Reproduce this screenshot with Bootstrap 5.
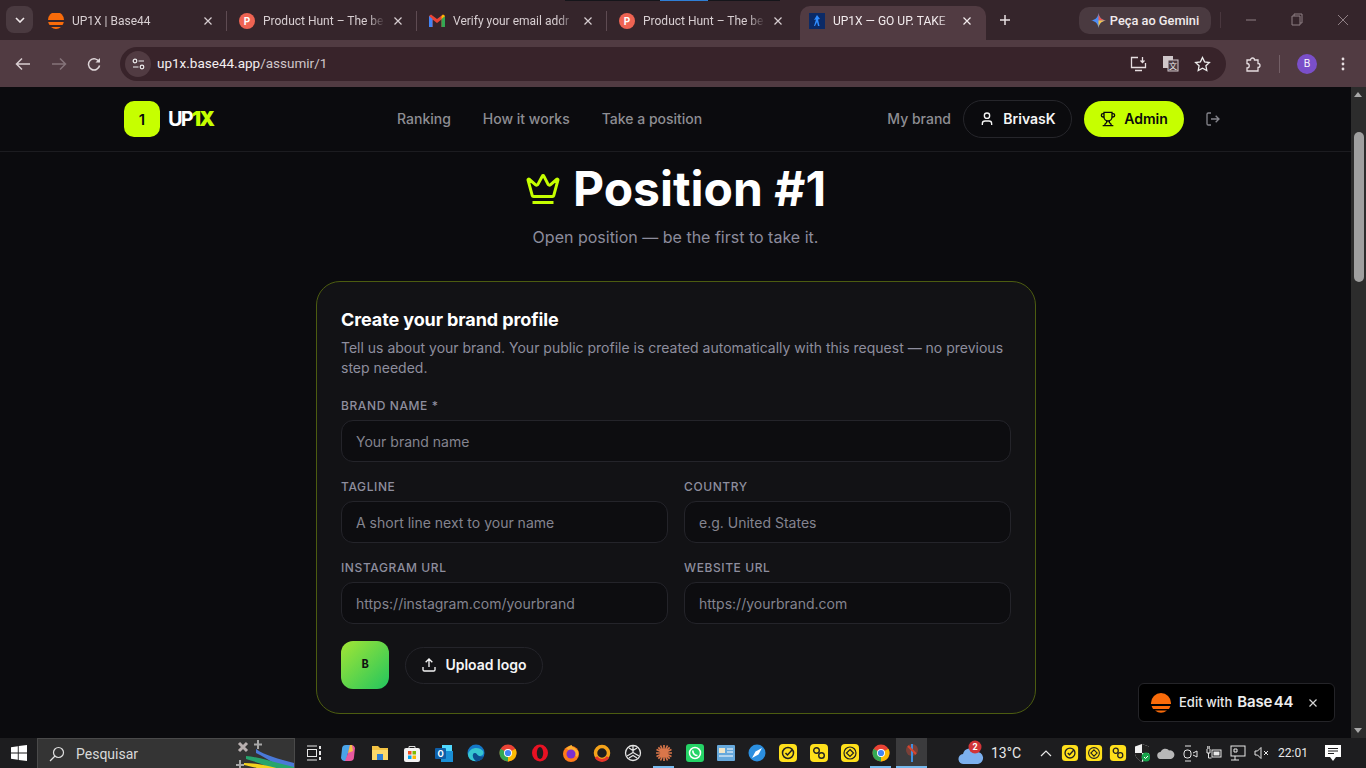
<!DOCTYPE html>
<html lang="en">
<head>
<meta charset="utf-8">
<title>UP1X — GO UP. TAKE</title>
<link rel="stylesheet" href="https://cdn.jsdelivr.net/npm/bootstrap@5.3.2/dist/css/bootstrap.min.css">
<style>
    html, body { height: 100%; overflow: hidden; }
    body { background: #0b0b0e; font-family: Inter, "Liberation Sans", sans-serif; color: #fff; }
    .screen { height: 768px; position: relative; }
    .top-edge { position: absolute; top: 0; left: 565px; width: 215px; height: 1px; background: #15151a; }
    .top-edge i { position: absolute; left: 95px; width: 48px; height: 1px; background: #2f7fd6; }

    /* browser frame */
    .tab-strip { height: 40px; background: #35252b; font: 12px Roboto, "Liberation Sans", sans-serif; color: #d8cfd2; padding-left: 6px; }
    .tab-menu { width: 27px; height: 27px; margin-top: 6px; border-radius: 8px; background: #4a3a40; }
    .tab-box { width: 190px; height: 34px; margin-top: 6px; padding: 0 10px 5px 12px; gap: 8px; position: relative; }
    .tab-first { margin-left: 4px; padding-left: 11px; }
    .tab-box + .tab-box::before { content: ""; position: absolute; left: -1px; top: 5px; height: 20px; width: 1px; background: #5e4b52; }
    .tab-on { background: #513b42; border-radius: 10px 10px 0 0; color: #f3ecee; width: 186px; margin-left: 3px; padding-left: 9px; }
    .tab-box.tab-on::before, .tab-on + .tab-box::before { display: none; }
    .tab-label { flex: 1; white-space: nowrap; font-size: 12px; -webkit-mask-image: linear-gradient(90deg, #000 86%, transparent); mask-image: linear-gradient(90deg, #000 86%, transparent); }
    .new-tab { margin: 14px 0 0 13px; flex-shrink: 0; }
    .gemini-pill { margin: 7px 0 0 68px; flex-shrink: 0; width: 132px; height: 27px; border-radius: 10px; background: #4a3a40; color: #f1eaec; font: 500 12.8px Roboto, sans-serif; }
    .win-btns { margin: 12px 0 0 9px; flex-shrink: 0; width: 146px; }
    .tool-row { height: 47px; background: #513b42; padding-left: 15px; }
    .nav-arrow { margin-right: 20px; flex-shrink: 0; }
    .addr-bar { width: 1106px; height: 34px; margin-left: 19px; border-radius: 17px; background: #38232a; padding-left: 5px; padding-right: 15px; font: 13.5px Roboto, sans-serif; color: #f4eff0; flex-shrink: 0; }
    .addr-bar > span { margin-top: -2px; }
    .addr-bar span span { color: #cfc6c9; }
    .site-chip { width: 26px; height: 26px; border-radius: 50%; background: #513b42; margin-right: 6px; }
    .addr-tools { gap: 15px; }
    .ext-icon { margin-left: 19px; flex-shrink: 0; }
    .tool-sep { width: 1px; height: 18px; background: #735f66; margin-left: 18px; flex-shrink: 0; }
    .acct-dot { width: 20px; height: 20px; margin-left: 17px; background: #7a4fc9; font-size: 10px; color: #fff; flex-shrink: 0; }
    .more-dots { margin-left: 24px; flex-shrink: 0; }

    /* page */
    .page-area { height: 651px; background: #0b0b0e; position: relative; overflow: hidden; }
    .page-inner { flex: 1; min-width: 0; }
    .scroll-rail { width: 15px; background: #2c2c2c; position: relative; }
    .scroll-rail .thumb { position: absolute; left: 3px; right: 2px; top: 45px; height: 150px; border-radius: 5px; background: #9f9f9f; }
    .scroll-up, .scroll-down { position: absolute; left: 3px; border-left: 4.5px solid transparent; border-right: 4.5px solid transparent; }
    .scroll-up { top: 5px; border-bottom: 5px solid #a8a8a8; }
    .scroll-down { bottom: 5px; border-top: 5px solid #a8a8a8; }

    .top-nav { height: 65px; border-bottom: 1px solid #1c1c20; padding: 0; }
    .top-nav .container-fluid { max-width: 1104px; padding: 0 7px 0 0; margin-left: 124px; position: relative; }
    .logo-mark { width: 36px; height: 36px; border-radius: 10px; background: #c6ff00; color: #0a0a0c; font: 600 15px Inter, sans-serif; }
    .logo-word { font: 700 20px/1 Inter, sans-serif; letter-spacing: -1.8px; margin-left: 8px; color: #fff; }
    .logo-word b { color: #c6ff00; }
    .center-links { position: absolute; left: 273px; top: 0; bottom: 0; gap: 32px; }
    .plain-link { color: #8e8e93; font-size: 14px; line-height: 20px; font-weight: 500; text-decoration: none; }
    .brand-link { margin-right: 12px; }
    .user-pill { height: 38px; width: 109px; border: 1px solid #26262b; border-radius: 19px; color: #f5f5f5; font-size: 14px; line-height: 20px; font-weight: 600; gap: 8px; background: transparent; padding: 0; }
    .admin-pill { height: 36px; width: 100px; margin-left: 12px; border: 0; border-radius: 18px; background: #c6ff00; color: #0a0a0c; font-size: 14px; line-height: 20px; font-weight: 600; gap: 8px; padding: 0; }
    .admin-pill:hover { background: #c6ff00; color: #0a0a0c; }
    .exit-icon { margin-left: 21px; }

    .page-head { padding-top: 13px; }
    .page-title { font: 700 48px/48px Inter, sans-serif; margin: 0; gap: 12px; }
    .page-sub { color: #8c8c9c; font-size: 16px; line-height: 24px; margin: 12px 0 32px; }
    .form-box { width: 720px; margin: 0 0 0 316px; background: #121215; border: 1px solid #4c5c10; border-radius: 24px; padding: 24px; }
    .form-box h2 { font: 700 18px/28px Inter, sans-serif; margin: 0 0 4px; letter-spacing: -.1px; color: #fff; }
    .form-intro { color: #8e8e9e; font-size: 14px; line-height: 20px; margin: 0 0 19px; }
    .field-label { font-size: 12px; line-height: 16px; padding-top: 1px; font-weight: 500; letter-spacing: .6px; text-transform: uppercase; color: #8e8e9e; margin-bottom: 6px; display: block; }
    .form-box .form-control { height: 42px; background: #0d0d10; border: 1px solid #24242a; border-radius: 12px; font-size: 14px; line-height: 20px; padding: 0 14px; color: #fff; }
    .form-box .form-control::placeholder { color: #84848f; opacity: 1; }
    .field-grid { --bs-gutter-x: 16px; --bs-gutter-y: 16px; }
    .brand-thumb { width: 48px; height: 48px; border-radius: 12px; background: linear-gradient(135deg, #a3e635, #22c55e); color: #111; font: 700 12px "Liberation Mono", monospace; }
    .upload-pill { height: 37px; width: 138px; border: 1px solid #24242a; border-radius: 19px; color: #f5f5f5; font-size: 14px; line-height: 20px; font-weight: 600; gap: 8px; padding: 0; background: transparent; margin-left: 16px; }
    .logo-row { margin-top: 17px; }

    .edit-badge { position: absolute; left: 1138px; top: 596px; width: 197px; height: 39px; background: #000; border: 1px solid #242428; border-radius: 6px; padding-left: 12px; color: #e9e9e9; font-size: 13px; font-weight: 500; }
    .edit-badge b { font-size: 15px; font-weight: 600; margin-left: 5px; color: #ededed; letter-spacing: -.2px; word-spacing: -2px; }
    .badge-close { margin-right: 16px; color: #d5d5d5; }

    /* windows taskbar */
    .task-row { height: 30px; background: #1d1d1f; font: 12px Roboto, sans-serif; color: #e8e8e8; }
    .start-slot { width: 37px; flex-shrink: 0; }
    .search-slot { width: 258px; height: 30px; flex-shrink: 0; background: #343434; border: 1px solid #4a4a4a; border-bottom: 0; padding-left: 11px; gap: 11px; font-size: 14px; color: #d9d9d9; position: relative; overflow: hidden; }
    .search-art { position: absolute; right: 0; top: 0; }
    .view-slot { width: 37px; flex-shrink: 0; }
    .app-slot { width: 31px; height: 30px; position: relative; flex-shrink: 0; }
    .app-wide { width: 32px; }
    .app-slot.is-open::after { content: ""; position: absolute; left: 5px; right: 5px; bottom: 0; height: 2px; background: #76b9ed; }
    .app-slot.is-active { background: #3b3b3d; }
    .app-slot.is-active::after { left: 0; right: 0; }
    .weather-slot { width: 26px; margin-left: 31px; flex-shrink: 0; }
    .temp-slot { width: 29px; margin-left: 7px; font-size: 14px; white-space: nowrap; flex-shrink: 0; }
    .tray-slot { width: 24px; flex-shrink: 0; }
    .tray-start { margin-left: 14px; }
    .clock-slot { margin-left: 4px; width: 30px; flex-shrink: 0; }
    .notify-slot { margin-left: 17px; width: 16px; flex-shrink: 0; }
</style>
</head>
<body>
<svg width="0" height="0" class="d-none">
    <symbol id="ph" viewBox="0 0 16 16"><circle cx="8" cy="8" r="8" fill="#ee6352"/><text x="8" y="11.6" text-anchor="middle" font-family="Roboto" font-weight="700" font-size="10" fill="#fff">P</text></symbol>
    <symbol id="x" viewBox="0 0 10 10"><path d="M1.5 1.5l7 7M8.5 1.5l-7 7" stroke="currentColor" stroke-width="1.2" fill="none"/></symbol>
    <symbol id="chrome" viewBox="0 0 18 18"><circle cx="9" cy="9" r="8.5" fill="#ea4335"/><path d="M9 9L1.6 4.8A8.5 8.5 0 0 0 9 17.5z" fill="#34a853"/><path d="M9 9l7.4-4.2A8.5 8.5 0 0 1 9 17.5z" fill="#fbbc04"/><circle cx="9" cy="9" r="4" fill="#fff"/><circle cx="9" cy="9" r="3.1" fill="#4285f4"/></symbol>
    <symbol id="ycheck" viewBox="0 0 20 20"><rect x="1" y="1" width="18" height="18" rx="4" fill="#ffe01b"/><circle cx="10" cy="10" r="5.5" fill="none" stroke="#222" stroke-width="1.5"/><path d="M7.5 10l2 2 4.5-5" fill="none" stroke="#222" stroke-width="1.5"/></symbol>
    <symbol id="ycogs" viewBox="0 0 20 20"><rect x="1" y="1" width="18" height="18" rx="4" fill="#ffe01b"/><circle cx="7.5" cy="7.5" r="2.8" fill="none" stroke="#222" stroke-width="1.4"/><circle cx="12.5" cy="12.5" r="2.8" fill="none" stroke="#222" stroke-width="1.4"/></symbol>
    <symbol id="ydiamond" viewBox="0 0 20 20"><rect x="1" y="1" width="18" height="18" rx="4" fill="#ffe01b"/><circle cx="10" cy="10" r="6" fill="none" stroke="#222" stroke-width="1.2"/><path d="M10 6.5l3.5 3.5-3.5 3.5L6.500 10z" fill="none" stroke="#222" stroke-width="1.2"/></symbol>
</svg>

<div class="screen d-flex flex-column">
    <div class="top-edge"><i></i></div>

    <div class="tab-strip d-flex align-items-start">
        <div class="tab-menu d-flex align-items-center justify-content-center">
            <svg width="10" height="6" viewBox="0 0 10 6"><path d="M1 1l4 4 4-4" stroke="#f0e8ea" stroke-width="1.6" fill="none"/></svg>
        </div>
        <div class="tab-box tab-first d-flex align-items-center">
            <svg width="16" height="16" viewBox="0 0 16 16"><path d="M0 7a8 8 0 0 1 16 0z" fill="#f96b0a"/><path d="M.2 9h15.600a8 8 0 0 1-1.300 3H1.500A8 8 0 0 1 .2 9z" fill="#f96b0a"/><path d="M3 14h10a8 8 0 0 1-10 0z" fill="#f96b0a"/></svg>
            <span class="tab-label">UP1X | Base44</span>
            <svg width="10" height="10" class="me-1"><use href="#x"/></svg>
        </div>
        <div class="tab-box d-flex align-items-center">
            <svg width="16" height="16"><use href="#ph"/></svg>
            <span class="tab-label">Product Hunt – The be</span>
            <svg width="10" height="10" class="me-1"><use href="#x"/></svg>
        </div>
        <div class="tab-box d-flex align-items-center">
            <svg width="16" height="13" viewBox="0 0 16 13"><path d="M0 2v11h3.500V5.500L8 9l4.500-3.500V13H16V2l-2-1.500L8 5 2 .5z" fill="#ea4335"/><path d="M0 2v11h3.500V5z" fill="#4285f4"/><path d="M16 2v11h-3.500V5z" fill="#34a853"/><path d="M12.500 5V2l1.500-1.500L16 2z" fill="#fbbc04"/></svg>
            <span class="tab-label">Verify your email addr</span>
            <svg width="10" height="10" class="me-1"><use href="#x"/></svg>
        </div>
        <div class="tab-box d-flex align-items-center">
            <svg width="16" height="16"><use href="#ph"/></svg>
            <span class="tab-label">Product Hunt – The be</span>
            <svg width="10" height="10" class="me-1"><use href="#x"/></svg>
        </div>
        <div class="tab-box tab-on d-flex align-items-center">
            <svg width="16" height="16" viewBox="0 0 16 16"><rect width="16" height="16" fill="#0b2a66"/><path d="M8 2l3 4-2 .5L10.500 13H9L8 9l-2 4H5l2-6.500L5 7z" fill="#2f8cff"/></svg>
            <span class="tab-label">UP1X — GO UP. TAKE</span>
            <svg width="10" height="10" class="me-1"><use href="#x"/></svg>
        </div>
        <svg width="12" height="12" viewBox="0 0 12 12" class="new-tab"><path d="M6 1v10M1 6h10" stroke="#e8e0e2" stroke-width="1.500"/></svg>
        <div class="gemini-pill d-flex align-items-center justify-content-center gap-1">
            <svg width="15" height="15" viewBox="0 0 16 16"><path d="M8 0c.5 4.500 3 7.200 8 8-5 .8-7.500 3.500-8 8-.5-4.500-3-7.200-8-8 5-.8 7.500-3.500 8-8z" fill="#4c8df6"/><path d="M8 0c.5 4.500 3 7.200 8 8H8z" fill="#ef5b4c"/><path d="M16 8c-5 .8-7.500 3.500-8 8V8z" fill="#f6c344"/></svg>
            <span>Peça ao Gemini</span>
        </div>
        <svg class="win-btns" height="16" viewBox="0 0 146 16">
            <path d="M0 0v16" stroke="#5e4b52"/>
            <path d="M26 8h10" stroke="#8f8085"/>
            <path d="M72 4h8v9h-8zM74 4V2h8v9h-2" fill="none" stroke="#8f8085"/>
            <path d="M118 3l10 10M128 3l-10 10" stroke="#8f8085"/>
        </svg>
    </div>

    <div class="tool-row d-flex align-items-center">
        <svg width="16" height="14" viewBox="0 0 16 14" class="nav-arrow"><path d="M15 7H2M7 1.500L1.500 7 7 12.500" stroke="#d9ced1" stroke-width="1.500" fill="none"/></svg>
        <svg width="16" height="14" viewBox="0 0 16 14" class="nav-arrow"><path d="M1 7h13M9 1.500L14.500 7 9 12.500" stroke="#85747a" stroke-width="1.500" fill="none"/></svg>
        <svg width="14" height="14" viewBox="0 0 14 14" class="flex-shrink-0"><path d="M12.200 5A5.600 5.600 0 1 0 12.600 8.500" stroke="#e0d7da" stroke-width="1.500" fill="none"/><path d="M13 1v4.500H8.500z" fill="#e0d7da"/></svg>
        <div class="addr-bar d-flex align-items-center">
            <div class="site-chip d-flex align-items-center justify-content-center">
                <svg width="13" height="12" viewBox="0 0 13 12"><circle cx="3" cy="3" r="1.800" fill="none" stroke="#eee" stroke-width="1.200"/><path d="M6.500 3H12M1 9h5.500" stroke="#eee" stroke-width="1.200"/><circle cx="10" cy="9" r="1.800" fill="none" stroke="#eee" stroke-width="1.200"/></svg>
            </div>
            <span>up1x.base44.app<span>/assumir/1</span></span>
            <div class="addr-tools ms-auto d-flex align-items-center">
                <svg width="17" height="16" viewBox="0 0 17 16"><path d="M8 1.500H1.500v10h14V7M5 14.500h7" stroke="#e6dde0" stroke-width="1.300" fill="none"/><path d="M12.500 1v5M10.500 4.500l2 2 2-2" stroke="#e6dde0" stroke-width="1.300" fill="none"/></svg>
                <svg width="17" height="17" viewBox="0 0 17 17"><rect x="1" y="1" width="10" height="12" fill="#cfc6c9"/><rect x="6" y="5" width="10" height="11" fill="#4c3a40" stroke="#cfc6c9"/><text x="11" y="14" text-anchor="middle" font-size="8" font-family="Noto Sans CJK SC" fill="#eee">文</text></svg>
                <svg width="17" height="16" viewBox="0 0 17 16"><path d="M8.500 1.500l2.100 4.400 4.800.6-3.500 3.300.9 4.700-4.300-2.300-4.300 2.300.9-4.700L1.600 6.500l4.800-.6z" fill="none" stroke="#eee" stroke-width="1.300"/></svg>
            </div>
        </div>
        <svg width="16" height="16" viewBox="0 0 16 16" class="ext-icon"><path d="M2 4h3.500a2 2 0 0 1 4 0H13v3.500a2 2 0 0 1 0 4V15H2v-3a2 2 0 0 0 0-4.500z" fill="none" stroke="#e6dde0" stroke-width="1.300"/></svg>
        <span class="tool-sep"></span>
        <span class="acct-dot d-flex align-items-center justify-content-center rounded-circle">B</span>
        <svg width="4" height="14" viewBox="0 0 4 14" class="more-dots"><circle cx="2" cy="2" r="1.400" fill="#e6dde0"/><circle cx="2" cy="7" r="1.400" fill="#e6dde0"/><circle cx="2" cy="12" r="1.400" fill="#e6dde0"/></svg>
    </div>

    <div class="page-area d-flex">
        <div class="page-inner">
            <nav class="navbar top-nav">
                <div class="container-fluid d-flex align-items-center flex-nowrap">
                    <a class="d-flex align-items-center text-decoration-none" href="#">
                        <span class="logo-mark d-flex align-items-center justify-content-center">1</span>
                        <span class="logo-word">UP<b>1X</b></span>
                    </a>
                    <div class="center-links d-flex align-items-center">
                        <a class="plain-link" href="#">Ranking</a>
                        <a class="plain-link" href="#">How it works</a>
                        <a class="plain-link" href="#">Take a position</a>
                    </div>
                    <div class="ms-auto d-flex align-items-center">
                        <a class="plain-link brand-link" href="#">My brand</a>
                        <button class="btn user-pill d-flex align-items-center justify-content-center" type="button">
                            <svg width="16" height="16" viewBox="0 0 24 24" fill="none" stroke="currentColor" stroke-width="2"><path d="M19 21v-2a4 4 0 0 0-4-4H9a4 4 0 0 0-4 4v2"/><circle cx="12" cy="7" r="4"/></svg>
                            BrivasK
                        </button>
                        <button class="btn admin-pill d-flex align-items-center justify-content-center" type="button">
                            <svg width="16" height="16" viewBox="0 0 24 24" fill="none" stroke="currentColor" stroke-width="2"><path d="M6 9H4.500a2.500 2.500 0 0 1 0-5H6M18 9h1.500a2.500 2.500 0 0 0 0-5H18M4 22h16M10 14.700V17c0 .6-.5 1-1 1.200-1.200.5-2 2-2 3.800M14 14.700V17c0 .6.500 1 1 1.200 1.200.5 2 2 2 3.800M18 2H6v7a6 6 0 0 0 12 0z"/></svg>
                            Admin
                        </button>
                        <svg width="16" height="16" viewBox="0 0 24 24" fill="none" stroke="#85858c" stroke-width="2" class="exit-icon"><path d="M9 21H5a2 2 0 0 1-2-2V5a2 2 0 0 1 2-2h4M16 17l5-5-5-5M21 12H9"/></svg>
                    </div>
                </div>
            </nav>

            <main class="page-head text-center">
                <h1 class="page-title d-flex align-items-center justify-content-center">
                    <svg width="36" height="36" viewBox="0 0 24 24" fill="none" stroke="#c6ff00" stroke-width="2"><path d="M11.600 3.300a.5.500 0 0 1 .9 0l2.900 5.600a1 1 0 0 0 1.500.3l4.300-3.700a.5.500 0 0 1 .8.500l-2.800 10.300a1 1 0 0 1-1 .7H5.800a1 1 0 0 1-1-.7L2 6a.5.500 0 0 1 .8-.5l4.300 3.700a1 1 0 0 0 1.500-.3zM5 21h14"/></svg>
                    <span>Position #1</span>
                </h1>
                <p class="page-sub">Open position — be the first to take it.</p>

                <form class="form-box text-start">
                    <h2>Create your brand profile</h2>
                    <p class="form-intro">Tell us about your brand. Your public profile is created automatically with this request — no previous step needed.</p>
                    <div class="row field-grid">
                        <div class="col-12">
                            <label class="field-label" for="brandName">Brand name *</label>
                            <input class="form-control" id="brandName" type="text" placeholder="Your brand name">
                        </div>
                        <div class="col-6">
                            <label class="field-label" for="tagline">Tagline</label>
                            <input class="form-control" id="tagline" type="text" placeholder="A short line next to your name">
                        </div>
                        <div class="col-6">
                            <label class="field-label" for="country">Country</label>
                            <input class="form-control" id="country" type="text" placeholder="e.g. United States">
                        </div>
                        <div class="col-6">
                            <label class="field-label" for="instagram">Instagram URL</label>
                            <input class="form-control" id="instagram" type="text" placeholder="https://instagram.com/yourbrand">
                        </div>
                        <div class="col-6">
                            <label class="field-label" for="website">Website URL</label>
                            <input class="form-control" id="website" type="text" placeholder="https://yourbrand.com">
                        </div>
                    </div>
                    <div class="logo-row d-flex align-items-center">
                        <div class="brand-thumb d-flex align-items-center justify-content-center">B</div>
                        <button class="btn upload-pill d-flex align-items-center justify-content-center" type="button">
                            <svg width="16" height="16" viewBox="0 0 24 24" fill="none" stroke="currentColor" stroke-width="2"><path d="M21 15v4a2 2 0 0 1-2 2H5a2 2 0 0 1-2-2v-4M17 8l-5-5-5 5M12 3v12"/></svg>
                            Upload logo
                        </button>
                    </div>
                </form>
            </main>
        </div>

        <div class="scroll-rail flex-shrink-0">
            <span class="scroll-up"></span>
            <span class="thumb"></span>
            <span class="scroll-down"></span>
        </div>

        <div class="edit-badge d-flex align-items-center">
            <svg width="20" height="20" viewBox="0 0 20 20" class="me-2 flex-shrink-0"><path d="M0 10a10 10 0 0 1 20 0v1H0z" fill="#f96b0a"/><path d="M.6 13h18.800a10 10 0 0 1-1.500 3H2.100a10 10 0 0 1-1.500-3z" fill="#f96b0a"/><path d="M4 17.500h12a10 10 0 0 1-12 0z" fill="#f96b0a"/></svg>
            <span>Edit with</span><b>Base 44</b>
            <svg width="10" height="10" class="badge-close ms-auto"><use href="#x"/></svg>
        </div>
    </div>

    <div class="task-row d-flex align-items-center">
        <div class="start-slot d-flex align-items-center justify-content-center">
            <svg width="16" height="16" viewBox="0 0 16 16"><path d="M0 2.200L6.800 1.200V7.500H0zM7.700 1.100L16 0v7.500H7.700zM0 8.500h6.800v6.300L0 13.800zM7.700 8.500H16V16l-8.300-1.100z" fill="#fff"/></svg>
        </div>
        <div class="search-slot d-flex align-items-center">
            <svg width="16" height="16" viewBox="0 0 16 16"><circle cx="9.500" cy="6.500" r="5" fill="none" stroke="#e0e0e0" stroke-width="1.200"/><path d="M6 10l-5 5" stroke="#e0e0e0" stroke-width="1.200"/></svg>
            <span>Pesquisar</span>
            <svg class="search-art" width="60" height="30" viewBox="0 0 60 30">
                <path d="M5 4l8 8M13 4l-8 8" stroke="#b9b0b0" stroke-width="3"/>
                <path d="M24 1v9M20 5.500h8M6 21v9M2 26h8" stroke="#a8a8a8" stroke-width="2"/>
                <path d="M22 10C30 16 45 20 60 24V30H50C40 24 30 18 22 14z" fill="#4a79d8"/>
                <path d="M12 17C25 18 42 24 60 28V30H38C30 26 20 22 12 20z" fill="#27a56d"/>
                <path d="M10 24C20 24 32 26 46 30H26C20 28 14 27 10 26z" fill="#f3d21f"/>
            </svg>
        </div>
        <div class="view-slot d-flex align-items-center justify-content-center">
            <svg width="16" height="16" viewBox="0 0 16 16" fill="none" stroke="#e8e8e8"><path d="M1 1h10M1 15h10"/><rect x="1.500" y="4.500" width="9" height="7"/><path d="M14 1v3M14 6v4M14 12v3" stroke-width="2"/></svg>
        </div>
        <div class="app-slot app-wide d-flex align-items-center justify-content-center"><svg width="18" height="18" viewBox="0 0 18 18"><path d="M3 5a4 4 0 0 1 4-4h5l-3 8-2 8H5a4 4 0 0 1-3-3z" fill="#4aa4e8"/><path d="M15 13a4 4 0 0 1-4 4H6l3-8 2-8h2a4 4 0 0 1 3 3z" fill="#e85aa0"/><path d="M9 9l2-8h2l1 6z" fill="#f3c04a"/></svg></div>
        <div class="app-slot app-wide d-flex align-items-center justify-content-center"><svg width="18" height="16" viewBox="0 0 18 16"><path d="M1 1h6l2 2h8v12H1z" fill="#f3c344"/><rect x="1" y="5" width="16" height="10" fill="#fbd96a"/><rect x="6" y="9" width="6" height="6" fill="#2f7fd6"/></svg></div>
        <div class="app-slot app-wide d-flex align-items-center justify-content-center"><svg width="16" height="18" viewBox="0 0 16 18"><path d="M5 4V2.500h6V4" fill="none" stroke="#ddd"/><rect y="4" width="16" height="14" rx="2" fill="#f3f3f3"/><rect x="4" y="7" width="3.500" height="3.500" fill="#f25022"/><rect x="8.500" y="7" width="3.500" height="3.500" fill="#7fba00"/><rect x="4" y="11.500" width="3.500" height="3.500" fill="#00a4ef"/><rect x="8.500" y="11.500" width="3.500" height="3.500" fill="#ffb900"/></svg></div>
        <div class="app-slot app-wide d-flex align-items-center justify-content-center"><svg width="18" height="18" viewBox="0 0 18 18"><path d="M7 1h10v8H7z" fill="#50d9ff"/><path d="M6 7h12v11H6z" fill="#1a8fd6"/><rect y="4" width="11" height="11" rx="1" fill="#0f5fa8"/><text x="5.500" y="12.500" text-anchor="middle" font-size="9" font-weight="700" font-family="Roboto" fill="#fff">O</text></svg></div>
        <div class="app-slot app-wide d-flex align-items-center justify-content-center"><svg width="18" height="18" viewBox="0 0 18 18"><circle cx="9" cy="9" r="8.500" fill="#1478c8"/><path d="M1 10C3 3 12 2 16 7c1.500 3-1 5-4 5-3 0-2-3-4-3-3 0-3 5 1 8-4 .500-8-2-8-7z" fill="#37c6d0"/><path d="M8 9c-3 0-3 5 1 8 4 0 7-2 8-5-1 .500-3 1-5 0-2-.5-2-3-4-3z" fill="#0c4f8f"/></svg></div>
        <div class="app-slot app-wide d-flex align-items-center justify-content-center"><svg width="18" height="18"><use href="#chrome"/></svg></div>
        <div class="app-slot d-flex align-items-center justify-content-center"><svg width="18" height="18" viewBox="0 0 18 18"><ellipse cx="9" cy="9" rx="8" ry="8.500" fill="#e81123"/><ellipse cx="9" cy="9" rx="3.200" ry="6" fill="#1d1d1f"/></svg></div>
        <div class="app-slot d-flex align-items-center justify-content-center"><svg width="18" height="18" viewBox="0 0 18 18"><circle cx="9" cy="10" r="8" fill="#ff7a1a"/><path d="M4 4c2 0 3-3 6-3-1 2 3 2 6 6 1 3 0 5-1 6" fill="#ffb02e"/><circle cx="9" cy="10" r="4.500" fill="#7b2fd0"/></svg></div>
        <div class="app-slot d-flex align-items-center justify-content-center"><svg width="18" height="18" viewBox="0 0 18 18"><circle cx="9" cy="9" r="6.500" fill="none" stroke="#f5a31a" stroke-width="3.500"/><path d="M3 13a7 7 0 0 0 12 0" fill="none" stroke="#e5342b" stroke-width="3"/></svg></div>
        <div class="app-slot d-flex align-items-center justify-content-center"><svg width="18" height="18" viewBox="0 0 18 18" fill="none" stroke="#e4e4e4" stroke-width="1.300"><circle cx="9" cy="9" r="7.500"/><path d="M9 1.500v7l6 3.500M9 8.500l-6 3.500M5 4l4 2.500 4-2.500M5 14l4-2.500 4 2.500"/></svg></div>
        <div class="app-slot is-open d-flex align-items-center justify-content-center"><svg width="18" height="18" viewBox="0 0 18 18" stroke="#d9764a" stroke-width="1.700"><path d="M9 1v16M1 9h16M3.300 3.300l11.400 11.400M14.700 3.300L3.300 14.700M5.500 1.500l7 15M12.500 1.500l-7 15M1.500 5.500l15 7M16.500 5.500l-15 7"/></svg></div>
        <div class="app-slot d-flex align-items-center justify-content-center"><svg width="18" height="18" viewBox="0 0 18 18"><rect width="18" height="18" rx="3" fill="#25d366"/><circle cx="9" cy="9" r="5.500" fill="none" stroke="#fff" stroke-width="1.500"/><path d="M6.800 6.500c0 3 2 5 4.700 5" stroke="#fff" stroke-width="1.700" fill="none"/></svg></div>
        <div class="app-slot d-flex align-items-center justify-content-center"><svg width="18" height="16" viewBox="0 0 18 16"><rect width="18" height="16" rx="1" fill="#67a9dc"/><rect x="2" y="3" width="6" height="5" fill="#f1e6c8"/><path d="M10 4h6M10 7h6M2 11h14" stroke="#fff" stroke-width="1.200"/></svg></div>
        <div class="app-slot d-flex align-items-center justify-content-center"><svg width="18" height="18" viewBox="0 0 18 18"><circle cx="9" cy="9" r="8.500" fill="#2b8fe0"/><path d="M14 4l-3.500 6.500L4 14l3.500-6.500z" fill="#fff"/></svg></div>
        <div class="app-slot d-flex align-items-center justify-content-center"><svg width="20" height="20"><use href="#ycheck"/></svg></div>
        <div class="app-slot d-flex align-items-center justify-content-center"><svg width="20" height="20"><use href="#ycogs"/></svg></div>
        <div class="app-slot d-flex align-items-center justify-content-center"><svg width="20" height="20"><use href="#ydiamond"/></svg></div>
        <div class="app-slot is-open d-flex align-items-center justify-content-center"><svg width="18" height="18"><use href="#chrome"/></svg></div>
        <div class="app-slot is-open is-active d-flex align-items-center justify-content-center"><svg width="14" height="20" viewBox="0 0 14 20"><circle cx="7" cy="7" r="6" fill="#7a4038"/><path d="M7 1v18" stroke="#3d8fe0" stroke-width="2"/><path d="M3 3l8 8" stroke="#d8442f" stroke-width="2"/></svg></div>

        <div class="weather-slot d-flex align-items-center"><svg width="26" height="26" viewBox="0 0 26 26"><path d="M6 24a5 5 0 0 1-1-10 7 7 0 0 1 13-2 6 6 0 0 1 2 12z" fill="#7cb0ee"/><circle cx="17" cy="7" r="6.500" fill="#d13438"/><text x="17" y="10" text-anchor="middle" font-size="9" font-weight="700" font-family="Roboto" fill="#fff">2</text></svg></div>
        <div class="temp-slot">13°C</div>
        <div class="tray-slot tray-start d-flex align-items-center justify-content-center"><svg width="12" height="7" viewBox="0 0 12 7"><path d="M1 6l5-5 5 5" stroke="#e8e8e8" fill="none" stroke-width="1.200"/></svg></div>
        <div class="tray-slot d-flex align-items-center justify-content-center"><svg width="18" height="18"><use href="#ycheck"/></svg></div>
        <div class="tray-slot d-flex align-items-center justify-content-center"><svg width="18" height="18"><use href="#ydiamond"/></svg></div>
        <div class="tray-slot d-flex align-items-center justify-content-center"><svg width="18" height="18"><use href="#ycogs"/></svg></div>
        <div class="tray-slot d-flex align-items-center justify-content-center"><svg width="16" height="18" viewBox="0 0 16 18"><path d="M8 0l7 2.500V9c0 4-3 7-7 9-4-2-7-5-7-9V2.500z" fill="#f2f2f2"/><path d="M8 0l7 2.500V9H8zM1 9h7v9c-4-2-7-5-7-9z" fill="#222"/><circle cx="12" cy="13" r="4.500" fill="#16a34a"/><path d="M10 13l1.500 1.500L14 12" stroke="#fff" fill="none"/></svg></div>
        <div class="tray-slot d-flex align-items-center justify-content-center"><svg width="18" height="12" viewBox="0 0 18 12"><path d="M4 12a3.500 3.500 0 0 1-.5-7A5 5 0 0 1 12 3.500 4.300 4.300 0 0 1 14 12z" fill="#b8b8b8"/></svg></div>
        <div class="tray-slot d-flex align-items-center justify-content-center"><svg width="16" height="18" viewBox="0 0 16 18" fill="none" stroke="#e8e8e8"><rect x="2" y="6" width="7" height="8" rx="3"/><path d="M11 9l4-2v6l-4-2M3 2h6M3 17h6"/></svg></div>
        <div class="tray-slot d-flex align-items-center justify-content-center"><svg width="16" height="14" viewBox="0 0 16 14" fill="none" stroke="#e8e8e8"><rect x="6" y="4" width="9" height="7"/><rect x="8" y="6" width="5" height="3" fill="#e8e8e8"/><path d="M1 3v4h3V3M2.500 7v5h3M1.800 0v3M3.200 0v3"/></svg></div>
        <div class="tray-slot d-flex align-items-center justify-content-center"><svg width="16" height="16" viewBox="0 0 16 16" fill="none" stroke="#e8e8e8"><rect x="1" y="1" width="14" height="10"/><path d="M5 11v4M1 15h8M4 4h3v3H4z"/></svg></div>
        <div class="tray-slot d-flex align-items-center justify-content-center"><svg width="16" height="14" viewBox="0 0 16 14" fill="none" stroke="#e8e8e8"><path d="M1 5h2.500L7 1.500v11L3.500 9H1zM10 5l4 4M14 5l-4 4"/></svg></div>
        <div class="clock-slot">22:01</div>
        <div class="notify-slot d-flex align-items-center"><svg width="16" height="16" viewBox="0 0 16 16"><path d="M0 0h16v12h-5l-3 4-3-4H0z" fill="#fff"/><path d="M3 3.500h10M3 6h10M3 8.500h6" stroke="#1d1d1f"/></svg></div>
    </div>
</div>

<script src="https://cdn.jsdelivr.net/npm/bootstrap@5.3.2/dist/js/bootstrap.bundle.min.js"></script>
</body>
</html>
